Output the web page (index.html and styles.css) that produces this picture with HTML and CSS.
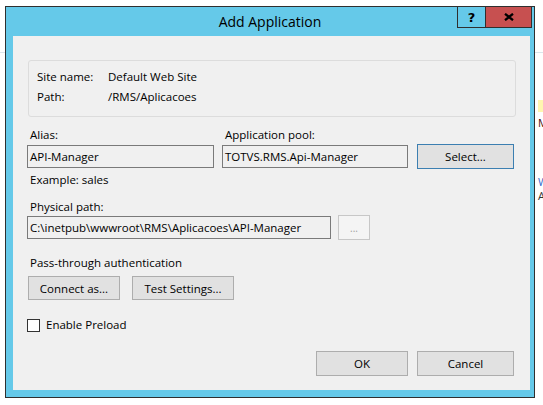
FILE: index.html
```html
<!DOCTYPE html>
<html>
<head>
<meta charset="utf-8">
<link rel="stylesheet" href="styles.css">
</head>
<body>
<div class="desktop">
  <div class="bg-top">Provides an alias for the Site SITE Details</div>
  <div class="bg-line"></div>
  <div class="bg-side">
    <span class="bg-yellow"></span>
    <span class="bg-m">M</span>
    <span class="bg-w">W</span>
    <span class="bg-a">A</span>
  </div>
  <div class="window">
    <div class="titlebar">
      <div class="title-spacer"></div>
      <div class="title">Add Application</div>
      <div class="caption-buttons">
        <div class="cap help">?</div>
        <div class="cap close">
          <svg width="10" height="8" viewBox="0 0 10 8"><path d="M1 0.8 L9 7.2 M9 0.8 L1 7.2" stroke="#000" stroke-width="2.3" fill="none"/></svg>
        </div>
      </div>
    </div>
    <div class="client">
      <div class="groupbox">
        <div class="info-row"><span class="info-label">Site name:</span><span>Default Web Site</span></div>
        <div class="info-row"><span class="info-label">Path:</span><span>/RMS/Aplicacoes</span></div>
      </div>
      <div class="alias-grid">
        <div class="label">Alias:</div>
        <div class="label">Application pool:</div>
        <div></div>
        <div class="field alias-field">API-Manager</div>
        <div class="field pool-field">TOTVS.RMS.Api-Manager</div>
        <div class="btn btn-default select-btn">Select...</div>
        <div class="hint">Example: sales</div>
      </div>
      <div class="label section">Physical path:</div>
      <div class="path-row">
        <div class="field path-field">C:\inetpub\wwwroot\RMS\Aplicacoes\API-Manager</div>
        <div class="btn btn-disabled browse-btn">...</div>
      </div>
      <div class="label section-auth">Pass-through authentication</div>
      <div class="auth-row">
        <div class="btn connect-btn">Connect as...</div>
        <div class="btn test-btn">Test Settings...</div>
      </div>
      <div class="check-row">
        <span class="checkbox"></span>
        <span class="check-label">Enable Preload</span>
      </div>
      <div class="footer">
        <div class="btn ok-btn">OK</div>
        <div class="btn cancel-btn">Cancel</div>
      </div>
    </div>
  </div>
</div>
</body>
</html>
```
FILE: styles.css
```css
* { box-sizing: border-box; }
html, body { margin: 0; padding: 0; }
body {
  background: #ffffff;
  font-family: "Open Sans", "Noto Sans", "Liberation Sans", sans-serif;
  font-size: 11.5px;
  color: #000;
}
.desktop {
  position: relative;
  width: 543px;
  height: 405px;
  overflow: hidden;
  padding-top: 6px;
  padding-left: 5px;
}
.bg-top {
  position: absolute;
  left: 14px;
  top: -11px;
  font-size: 12px;
  line-height: 14px;
  color: #222;
  white-space: nowrap;
}
.bg-line {
  position: absolute;
  left: 0;
  top: 52px;
  width: 543px;
  height: 1px;
  background: #dbe6ec;
}
.bg-side { position: absolute; left: 537px; top: 0; width: 10px; height: 405px; }
.bg-side span { position: absolute; left: 1px; font-size: 11px; line-height: 12px; }
.bg-yellow { top: 100px; width: 8px; height: 12px; background: #fff6b0; }
.bg-m { top: 117px; color: #4a0a0a; }
.bg-w { top: 176px; color: #3366cc; }
.bg-a { top: 190px; color: #333; }

.window {
  position: relative;
  width: 530px;
  height: 392px;
  border: 1px solid #2f2f2f;
  background: #65c9e9;
  display: flex;
  flex-direction: column;
}
.titlebar {
  height: 29px;
  display: grid;
  grid-template-columns: 77px 1fr 77px;
  flex: none;
}
.title {
  text-align: center;
  font-size: 14px;
  line-height: 29px;
  color: #000;
}
.caption-buttons {
  display: flex;
  justify-content: flex-end;
  margin-top: -1px;
  margin-right: 2px;
  height: 22px;
}
.cap {
  height: 22px;
  border: 1px solid #2f2f2f;
  display: flex;
  align-items: center;
  justify-content: center;
}
.help {
  width: 29px;
  border-right: none;
  font-weight: bold;
  font-size: 13px;
  font-family: "DejaVu Sans", sans-serif;
}
.close {
  width: 48px;
  background: #c75050;
}
.client {
  flex: 1;
  margin: 0 4px 7px 7px;
  background: #f0f0f0;
  padding: 24px 16px 0 14px;
}
.groupbox {
  height: 57px;
  margin: 0 -2px 0 1px;
  border: 1px solid #dcdcdc;
  border-radius: 3px;
  padding: 6px 0 0 8px;
}
.info-row { display: flex; line-height: 20px; }
.info-label { width: 71px; }

.alias-grid {
  margin-top: 10px;
  display: grid;
  grid-template-columns: 195px 195px 97px;
  grid-template-rows: 16px 25px 16px;
  row-gap: 0;
  align-items: center;
}
.label { line-height: 16px; padding-left: 3px; }
.alias-grid .label { align-self: start; }
.alias-grid .field { margin-top: 2px; }
.select-btn { margin-top: 2px; }
.field {
  height: 23px;
  border: 1px solid #7a7a7a;
  background: #f0f0f0;
  padding-left: 2px;
  line-height: 21px;
  white-space: nowrap;
  overflow: hidden;
}
.alias-field { width: 187px; }
.pool-field { width: 186px; }
.hint { padding-left: 3px; line-height: 16px; margin-top: 8px; grid-column: 1 / 2; }

.btn {
  height: 24px;
  border: 1px solid #adadad;
  background: #e1e1e1;
  display: flex;
  align-items: center;
  justify-content: center;
}
.btn-default { border-color: #3c7fb1; }
.select-btn { height: 25px; width: 97px; }

.section { margin-top: 15px; }
.path-row {
  margin-top: 0;
  display: flex;
  align-items: center;
  gap: 7px;
  height: 25px;
}
.path-field { width: 304px; }
.browse-btn {
  width: 32px;
  height: 25px;
  background: #f4f4f4;
  border-color: #c7c7c7;
  color: #a0a0a0;
  font-size: 10px;
}

.section-auth { margin-top: 15px; }
.auth-row {
  margin-top: 5px;
  margin-left: 1px;
  display: flex;
  gap: 12px;
}
.connect-btn { width: 92px; }
.test-btn { width: 102px; }

.check-row {
  margin-top: 17px;
  display: flex;
  align-items: center;
  height: 16px;
}
.checkbox {
  width: 13px;
  height: 13px;
  background: #fff;
  border: 1px solid #333;
}
.check-label { margin-left: 6px; line-height: 16px; }

.footer {
  margin-top: 18px;
  display: flex;
  justify-content: flex-end;
  gap: 9px;
}
.ok-btn { width: 92px; height: 25px; }
.cancel-btn { width: 97px; height: 25px; }
```
